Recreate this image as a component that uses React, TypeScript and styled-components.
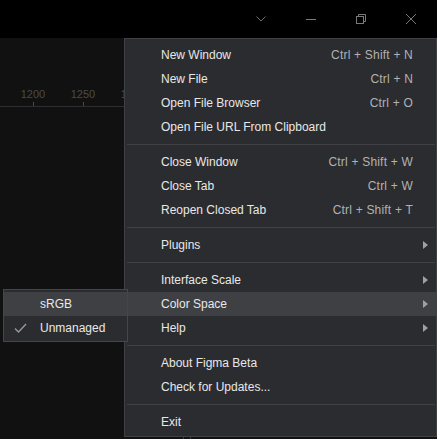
import React from "react";
import styled, { createGlobalStyle } from "styled-components";

const Global = createGlobalStyle`
  html, body { margin: 0; padding: 0; background: #000; }
  body { font-family: "Liberation Sans", Arial, sans-serif; }
`;

const Screen = styled.div`
  position: relative;
  width: 437px;
  height: 439px;
  overflow: hidden;
  background: #111111;
  display: flex;
  flex-direction: column;
`;

const TitleBar = styled.div`
  height: 38px;
  background: #000;
  display: flex;
  justify-content: flex-end;
  align-items: center;
  padding-right: 1px;
  flex-shrink: 0;
`;

const WinButton = styled.div`
  width: 50px;
  height: 38px;
  display: flex;
  align-items: center;
  justify-content: center;
`;

const Ruler = styled.div`
  height: 68px;
  border-bottom: 1px solid #2e2e2e;
  position: relative;
  display: flex;
  align-items: flex-end;
  padding-left: 8px;
`;

const Tick = styled.div`
  width: 50px;
  display: flex;
  flex-direction: column;
  align-items: center;
  font-size: 11px;
  color: #4a4a4a;
  line-height: 12px;
`;

const TickMark = styled.div`
  width: 1px;
  height: 4px;
  background: #4a4a4a;
  margin-top: 2px;
`;

const Menu = styled.div`
  position: absolute;
  left: 124px;
  top: 38px;
  width: 313px;
  height: 399px;
  box-sizing: border-box;
  background: #2b2c2f;
  border: 1px solid #404144;
  padding: 4px 0 2px;
  display: flex;
  flex-direction: column;
`;

const Row = styled.div<{ $active?: boolean }>`
  height: 24px;
  flex-shrink: 0;
  display: flex;
  align-items: center;
  padding-left: 36px;
  padding-right: 23px;
  background: ${(p) => (p.$active ? "#3f4043" : "transparent")};
  font-size: 12px;
  color: #e8e8e8;
  position: relative;
`;

const Label = styled.span`
  flex: 1;
  white-space: nowrap;
`;

const Shortcut = styled.span`
  color: #b2b2b2;
  white-space: nowrap;
  letter-spacing: 0.2px;
`;

const Arrow = styled.span`
  position: absolute;
  right: 8px;
  top: 8px;
  width: 0;
  height: 0;
  border-top: 4px solid transparent;
  border-bottom: 4px solid transparent;
  border-left: 5px solid #a0a0a0;
`;

const Separator = styled.div`
  height: 1px;
  background: #404144;
  margin: 5px 1px 5px 2px;
  flex-shrink: 0;
`;

const SubMenu = styled.div`
  position: absolute;
  left: 3px;
  top: 289px;
  width: 125px;
  height: 53px;
  box-sizing: border-box;
  background: #2b2c2f;
  border: 1px solid #45464a;
  padding: 2px 0 0;
  display: flex;
  flex-direction: column;
`;

const SubRow = styled.div<{ $active?: boolean }>`
  height: 24px;
  flex-shrink: 0;
  display: flex;
  align-items: center;
  padding-left: 36px;
  position: relative;
  font-size: 12px;
  color: #e8e8e8;
  background: ${(p) => (p.$active ? "#3f4043" : "transparent")};
`;

const Check = styled.svg`
  position: absolute;
  left: 10px;
  top: 7px;
`;

const BottomLines = styled.div`
  position: absolute;
  left: 183px;
  top: 435px;
  width: 6px;
  height: 4px;
  border-left: 1px solid #3a3a3a;
  border-right: 1px solid #3a3a3a;
`;

type Item =
  | { kind: "sep" }
  | { kind: "item"; label: string; shortcut?: string; sub?: boolean; active?: boolean };

const items: Item[] = [
  { kind: "item", label: "New Window", shortcut: "Ctrl + Shift + N" },
  { kind: "item", label: "New File", shortcut: "Ctrl + N" },
  { kind: "item", label: "Open File Browser", shortcut: "Ctrl + O" },
  { kind: "item", label: "Open File URL From Clipboard" },
  { kind: "sep" },
  { kind: "item", label: "Close Window", shortcut: "Ctrl + Shift + W" },
  { kind: "item", label: "Close Tab", shortcut: "Ctrl + W" },
  { kind: "item", label: "Reopen Closed Tab", shortcut: "Ctrl + Shift + T" },
  { kind: "sep" },
  { kind: "item", label: "Plugins", sub: true },
  { kind: "sep" },
  { kind: "item", label: "Interface Scale", sub: true },
  { kind: "item", label: "Color Space", sub: true, active: true },
  { kind: "item", label: "Help", sub: true },
  { kind: "sep" },
  { kind: "item", label: "About Figma Beta" },
  { kind: "item", label: "Check for Updates..." },
  { kind: "sep" },
  { kind: "item", label: "Exit" },
];

export default function App() {
  return (
    <Screen>
      <Global />
      <TitleBar>
        <WinButton>
          <svg width="10" height="6" viewBox="0 0 10 6">
            <path d="M0.5 0.5 L5 5 L9.5 0.5" stroke="#6e6e6e" strokeWidth="1" fill="none" />
          </svg>
        </WinButton>
        <WinButton>
          <svg width="10" height="10" viewBox="0 0 10 10">
            <path d="M0 5.5 H10" stroke="#7a7a7a" strokeWidth="1" />
          </svg>
        </WinButton>
        <WinButton>
          <svg width="10" height="10" viewBox="0 0 10 10">
            <rect x="0.5" y="2.5" width="7" height="7" stroke="#7a7a7a" fill="none" />
            <path d="M2.5 2.5 V0.5 H9.5 V7.5 H7.5" stroke="#7a7a7a" fill="none" />
          </svg>
        </WinButton>
        <WinButton>
          <svg width="10" height="10" viewBox="0 0 10 10">
            <path d="M0 0 L10 10 M10 0 L0 10" stroke="#7a7a7a" strokeWidth="1" />
          </svg>
        </WinButton>
      </TitleBar>
      <Ruler>
        <Tick>
          1200
          <TickMark />
        </Tick>
        <Tick>
          1250
          <TickMark />
        </Tick>
        <Tick>
          1300
          <TickMark />
        </Tick>
      </Ruler>
      <BottomLines />
      <Menu>
        {items.map((it, i) =>
          it.kind === "sep" ? (
            <Separator key={i} />
          ) : (
            <Row key={i} $active={it.active}>
              <Label>{it.label}</Label>
              {it.shortcut && <Shortcut>{it.shortcut}</Shortcut>}
              {it.sub && <Arrow />}
            </Row>
          )
        )}
      </Menu>
      <SubMenu>
        <SubRow $active>sRGB</SubRow>
        <SubRow>
          <Check width="13" height="10" viewBox="0 0 13 10">
            <path d="M1 5.5 L4.5 9 L12 1" stroke="#9a9a9a" strokeWidth="1.3" fill="none" />
          </Check>
          Unmanaged
        </SubRow>
      </SubMenu>
    </Screen>
  );
}
